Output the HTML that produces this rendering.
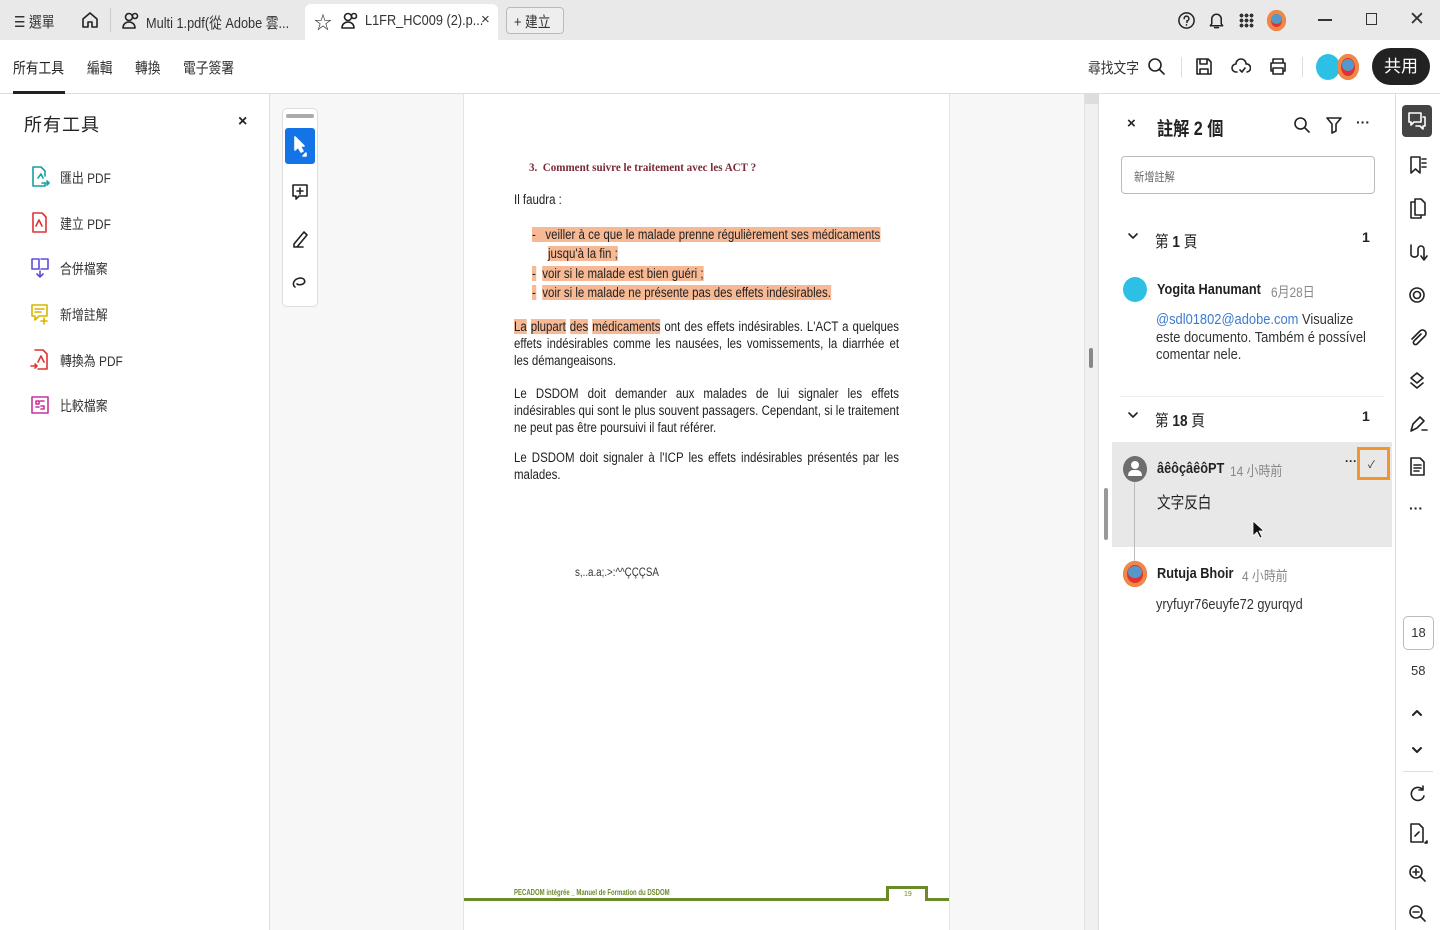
<!DOCTYPE html>
<html><head><meta charset="utf-8"><style>
*{margin:0;padding:0;box-sizing:border-box}
body{width:1440px;height:930px;overflow:hidden;background:#fff;font-family:"Liberation Sans","Noto Sans CJK TC",sans-serif;color:#222;position:relative}
.a{position:absolute}
.n{transform:scaleX(.85);transform-origin:0 0;white-space:nowrap}
svg{position:absolute;fill:none;stroke:#222;stroke-width:1.6;stroke-linecap:round;stroke-linejoin:round}
.t{font-size:14px;color:#333}
.pdf{font-size:13.5px;color:#222;line-height:17px;text-align:justify;width:453px;transform:scaleX(.85);transform-origin:0 0}
.hl{background:#f7b894}
.ri{left:1408px}
</style></head><body>
<!-- tab bar -->
<div class="a" style="left:0;top:0;width:1440px;height:40px;background:#e9e9e9"></div>
<div class="a" style="left:305px;top:4px;width:193px;height:36px;background:#fff;border-radius:6px 6px 0 0"></div>
<div class="a t n" style="left:14px;top:11px;font-size:15px">☰ 選單</div>
<svg style="left:80px;top:10px" width="20" height="20" viewBox="0 0 20 20"><path d="M3 9L10 3L17 9V17H12V12H8V17H3Z"/></svg>
<div class="a" style="left:110px;top:8px;width:1px;height:24px;background:#ccc"></div>
<svg style="left:121px;top:11px" width="20" height="20" viewBox="0 0 20 20"><circle cx="8" cy="6" r="3.5"/><path d="M2 17c0-4 3-6 6-6s6 2 6 6z"/><circle cx="14" cy="5" r="2.5"/></svg>
<div class="a t n" style="left:146px;top:12px;font-size:15px">Multi 1.pdf(從 Adobe 雲...</div>
<div class="a" style="left:314px;top:9px;font-size:18px;color:#333">☆</div>
<svg style="left:340px;top:11px" width="20" height="20" viewBox="0 0 20 20"><circle cx="8" cy="6" r="3.5"/><path d="M2 17c0-4 3-6 6-6s6 2 6 6z"/><circle cx="14" cy="5" r="2.5"/></svg>
<div class="a t n" style="left:365px;top:12px;font-size:15px">L1FR_HC009 (2).p...</div>
<div class="a t" style="left:481px;top:11px;font-size:15px">×</div>
<div class="a t" style="left:506px;top:7px;width:58px;height:27px;border:1px solid #bbb;border-radius:4px;background:#eee;font-size:15px;padding:3px 0 0 7px"><span class="n" style="display:inline-block">+ 建立</span></div>
<svg style="left:1177px;top:11px" width="19" height="19" viewBox="0 0 20 20"><circle cx="10" cy="10" r="8"/><path d="M7.5 8a2.5 2.5 0 1 1 3 2.4V12M10 14.5v.2"/></svg>
<svg style="left:1207px;top:10px" width="19" height="20" viewBox="0 0 20 20"><path d="M5 14V9a5 5 0 0 1 10 0v5l1.5 2h-13zM8 18h4"/></svg>
<div class="a" style="left:1239px;top:13px;width:15px;height:15px;background:radial-gradient(circle,#333 1.8px,transparent 2px) 0 0/5px 5px"></div>
<div class="a" style="left:1267px;top:10px;width:19px;height:21px;border-radius:50%;background:#d33;box-shadow:inset 0 0 0 4px #e84"></div><div class="a" style="left:1271px;top:14px;width:11px;height:10px;border-radius:50%;background:#59c"></div>
<div class="a" style="left:1318px;top:19px;width:14px;height:1.5px;background:#333"></div>
<div class="a" style="left:1366px;top:13px;width:11px;height:12px;border:1.5px solid #333"></div>
<div class="a t" style="left:1409px;top:8px;font-size:19px">✕</div>
<!-- toolbar -->
<div class="a" style="left:0;top:93px;width:1440px;height:1px;background:#ddd"></div>
<div class="a n" style="left:13px;top:57px;font-size:15px">所有工具</div>
<div class="a" style="left:13px;top:91px;width:52px;height:3px;background:#222"></div>
<div class="a t n" style="left:87px;top:57px;font-size:15px">編輯</div>
<div class="a t n" style="left:135px;top:57px;font-size:15px">轉換</div>
<div class="a t n" style="left:183px;top:57px;font-size:15px">電子簽署</div>
<div class="a t n" style="left:1088px;top:57px;font-size:15px">尋找文字</div>
<svg style="left:1147px;top:57px" width="20" height="20" viewBox="0 0 20 20"><circle cx="8" cy="8" r="6"/><path d="M12.5 12.5L17 17"/></svg>
<div class="a" style="left:1181px;top:57px;width:1px;height:20px;background:#ddd"></div>
<svg style="left:1195px;top:57px" width="18" height="19" viewBox="0 0 18 19"><path d="M2 2h11l3 3v12H2z M5 2v5h7V2 M5 17v-5h8v5"/></svg>
<svg style="left:1231px;top:57px" width="20" height="18" viewBox="0 0 20 18"><path d="M6 15H5a4 4 0 0 1 0-8 5 5 0 0 1 10 0 4 4 0 0 1 1 8M9 13l2 2 3-4"/></svg>
<svg style="left:1268px;top:57px" width="20" height="19" viewBox="0 0 20 19"><path d="M5 6V2h10v4M3 6h14v8h-2M5 14H3V6M5 11h10v6H5z"/></svg>
<div class="a" style="left:1302px;top:57px;width:1px;height:20px;background:#ddd"></div>
<div class="a" style="left:1316px;top:54px;width:24px;height:26px;border-radius:50%;background:#2bc0e4"></div>
<div class="a" style="left:1337px;top:54px;width:22px;height:26px;border-radius:50%;background:#d33;box-shadow:inset 0 0 0 4px #e84"></div><div class="a" style="left:1342px;top:59px;width:12px;height:12px;border-radius:50%;background:#59c"></div>
<div class="a" style="left:1372px;top:48px;width:58px;height:37px;border-radius:19px;background:#222;color:#fff;font-size:17px;text-align:center;line-height:37px">共用</div>
<!-- left panel -->
<div class="a" style="left:269px;top:94px;width:1px;height:836px;background:#ddd"></div>
<div class="a" style="left:24px;top:111px;font-size:18px;letter-spacing:1px">所有工具</div>
<div class="a" style="left:238px;top:113px;font-size:16px;font-weight:bold">×</div>
<svg style="left:30px;top:166px;stroke:#1a9e9e" width="20" height="22" viewBox="0 0 20 22"><path d="M3 1h8l4 4v5M15 17v3H3V1M8 12l3-4 2 4M12 17h7M17 15l2 2-2 2"/></svg>
<svg style="left:30px;top:212px;stroke:#d33" width="20" height="22" viewBox="0 0 20 22"><path d="M3 1h9l4 4v15H3zM6 14l3-6 3 6"/></svg>
<svg style="left:30px;top:257px;stroke:#5b4fd6" width="20" height="22" viewBox="0 0 20 22"><path d="M2 2h7v10H2zM11 2h7v10h-7M10 14v6M7 17l3 3 3-3"/></svg>
<svg style="left:30px;top:303px;stroke:#d7b400" width="20" height="22" viewBox="0 0 20 22"><path d="M2 2h15v11H9l-4 4v-4H2zM5 6h9M5 9h6M14 15v6M11 18h6"/></svg>
<svg style="left:30px;top:349px;stroke:#d33" width="20" height="22" viewBox="0 0 20 22"><path d="M5 1h8l4 4v15H8M8 13l3-6 3 6M1 17h6M5 15l2 2-2 2"/></svg>
<svg style="left:30px;top:395px;stroke:#c8329e" width="20" height="20" viewBox="0 0 20 20"><path d="M2 2h16v16H2zM6 6h3v3H6zM11 11h3v3h-3M10 6h4M6 12h3"/></svg>
<div class="a t n" style="left:60px;top:168px">匯出 PDF</div>
<div class="a t n" style="left:60px;top:214px">建立 PDF</div>
<div class="a t n" style="left:60px;top:259px">合併檔案</div>
<div class="a t n" style="left:60px;top:305px">新增註解</div>
<div class="a t n" style="left:60px;top:351px">轉換為 PDF</div>
<div class="a t n" style="left:60px;top:396px">比較檔案</div>
<!-- canvas -->
<div class="a" style="left:270px;top:94px;width:829px;height:836px;background:#f7f7f7"></div>
<div class="a" style="left:282px;top:108px;width:36px;height:199px;background:#fff;border:1px solid #ddd;border-radius:5px"></div>
<div class="a" style="left:286px;top:114px;width:28px;height:4px;background:#aaa;border-radius:2px"></div>
<div class="a" style="left:285px;top:128px;width:30px;height:36px;background:#1473e6;border-radius:3px"></div>
<svg style="left:292px;top:135px;fill:#fff;stroke:#fff" width="16" height="22" viewBox="0 0 16 22"><path d="M3 2v13l3-3 3 5 2-1-3-5h4z"/><path d="M14 18l-3 3h3z"/></svg>
<svg style="left:290px;top:182px" width="20" height="20" viewBox="0 0 20 20"><path d="M3 3h14v11h-8l-3 3v-3H3zM10 6v6M7 9h6"/></svg>
<svg style="left:290px;top:227px" width="22" height="24" viewBox="0 0 22 24"><path d="M4 17l10-12 3 3-10 12H4zM4 20h9"/></svg>
<svg style="left:290px;top:274px" width="20" height="18" viewBox="0 0 20 18"><path d="M5 13C2 11 3 5 10 4c5 0 6 4 3 6-2 1-5 1-6 0"/></svg>
<!-- page -->
<div class="a" style="left:463px;top:94px;width:487px;height:836px;background:#fff;border-left:1px solid #e4e4e4;border-right:1px solid #e4e4e4"></div>
<div class="a" style="left:529px;top:160px;font-family:'Liberation Serif',serif;font-weight:bold;font-size:12px;color:#7a2a35;transform:scaleX(.92);transform-origin:0 0;white-space:nowrap">3.&nbsp; Comment suivre le traitement avec les ACT ?</div>
<div class="a pdf" style="left:514px;top:191px">Il faudra :</div>
<div class="a pdf" style="left:532px;top:225px;text-align:left;white-space:nowrap;line-height:19.3px"><span class="hl">-&nbsp;&nbsp; veiller à ce que le malade prenne régulièrement ses médicaments</span><br>&nbsp;&nbsp;&nbsp;&nbsp;&nbsp;<span class="hl">jusqu'à la fin ;</span><br><span class="hl">-</span>&nbsp; <span class="hl">voir si le malade est bien guéri ;</span><br><span class="hl">-</span>&nbsp; <span class="hl">voir si le malade ne présente pas des effets indésirables.</span></div>
<div class="a pdf" style="left:514px;top:318px"><span class="hl">La</span> <span class="hl">plupart</span> <span class="hl">des</span> <span class="hl">médicaments</span> ont des effets indésirables. L'ACT a quelques effets indésirables comme les nausées, les vomissements, la diarrhée et les démangeaisons.</div>
<div class="a pdf" style="left:514px;top:385px">Le DSDOM doit demander aux malades de lui signaler les effets indésirables qui sont le plus souvent passagers. Cependant, si le traitement ne peut pas être poursuivi il faut référer.</div>
<div class="a pdf" style="left:514px;top:449px">Le DSDOM doit signaler à l'ICP les effets indésirables présentés par les malades.</div>
<div class="a n" style="left:575px;top:567px;font-size:11.5px;color:#333">s,..a.a;.&gt;:^^ÇÇÇSA</div>
<div class="a" style="left:514px;top:888px;font-size:8px;font-weight:bold;color:#6b8a2a;transform:scaleX(.75);transform-origin:left;white-space:nowrap">PECADOM intégrée _ Manuel de Formation du DSDOM</div>
<div class="a" style="left:464px;top:898px;width:423px;height:3px;background:#6b8a2a"></div>
<div class="a" style="left:886px;top:886px;width:42px;height:15px;border:3px solid #6b8a2a;border-bottom:none"></div>
<div class="a" style="left:927px;top:898px;width:22px;height:3px;background:#6b8a2a"></div>
<div class="a" style="left:904px;top:891px;font-size:7px;color:#6b8a2a">19</div>
<!-- scrollbar -->
<div class="a" style="left:1084px;top:94px;width:14px;height:836px;background:#f0f0f0;border-left:1px solid #e2e2e2"></div>
<div class="a" style="left:1085px;top:94px;width:13px;height:10px;background:#ddd"></div>
<div class="a" style="left:1089px;top:348px;width:4px;height:20px;background:#888;border-radius:2px"></div>
<div class="a" style="left:1098px;top:94px;width:1px;height:836px;background:#ddd"></div>
<!-- comments panel -->
<div class="a" style="left:1127px;top:115px;font-size:15px;font-weight:bold">×</div>
<div class="a n" style="left:1157px;top:114px;font-size:19px;font-weight:bold">註解 2 個</div>
<svg style="left:1293px;top:116px" width="18" height="18" viewBox="0 0 18 18"><circle cx="7.5" cy="7.5" r="5.5"/><path d="M11.5 11.5L16 16"/></svg>
<svg style="left:1325px;top:116px" width="18" height="18" viewBox="0 0 18 18"><path d="M2 2h14l-5 6v7l-4 2V8z"/></svg>
<div class="a" style="left:1356px;top:114px;font-size:14px;font-weight:bold">···</div>
<div class="a" style="left:1121px;top:156px;width:254px;height:38px;border:1px solid #bbb;border-radius:4px;font-size:12px;color:#666;padding:11px 12px"><span class="n" style="display:inline-block">新增註解</span></div>
<svg style="left:1127px;top:231px" width="12" height="10" viewBox="0 0 12 10"><path d="M2 3l4 4 4-4"/></svg>
<div class="a n" style="left:1155px;top:228px;font-size:16px">第 <b>1</b> 頁</div>
<div class="a" style="left:1362px;top:229px;font-size:14px;font-weight:bold">1</div>
<div class="a" style="left:1123px;top:277px;width:24px;height:25px;border-radius:50%;background:#2bc0e4"></div>
<div class="a n" style="left:1157px;top:281px;font-size:15px;font-weight:bold">Yogita Hanumant</div>
<div class="a n" style="left:1271px;top:282px;font-size:14px;color:#888">6月28日</div>
<div class="a" style="left:1156px;top:311px;font-size:15px;line-height:17.5px;color:#333;width:250px;transform:scaleX(.86);transform-origin:0 0"><span style="color:#3b7bd0">@sdl01802@adobe.com</span> Visualize este documento. Também é possível comentar nele.</div>
<div class="a" style="left:1120px;top:396px;width:264px;height:1px;background:#eee"></div>
<svg style="left:1127px;top:410px" width="12" height="10" viewBox="0 0 12 10"><path d="M2 3l4 4 4-4"/></svg>
<div class="a n" style="left:1155px;top:407px;font-size:16px">第 <b>18</b> 頁</div>
<div class="a" style="left:1362px;top:408px;font-size:14px;font-weight:bold">1</div>
<div class="a" style="left:1112px;top:442px;width:280px;height:105px;background:#e8e8e8"></div>
<div class="a" style="left:1123px;top:456px;width:24px;height:26px;border-radius:50%;background:#6e6e6e"></div>
<div class="a" style="left:1131px;top:461px;width:8px;height:8px;border-radius:50%;background:#fff"></div>
<div class="a" style="left:1128px;top:470px;width:14px;height:6px;border-radius:6px 6px 1px 1px;background:#fff"></div>
<div class="a" style="left:1134px;top:482px;width:1px;height:80px;background:#bbb"></div>
<div class="a n" style="left:1157px;top:460px;font-size:15px;font-weight:bold">âêôçâêôPT</div>
<div class="a n" style="left:1230px;top:461px;font-size:14px;color:#888">14 小時前</div>
<div class="a" style="left:1345px;top:454px;font-size:12px;font-weight:bold">···</div>
<div class="a" style="left:1357px;top:447px;width:33px;height:33px;border:3px solid #f0962c"></div>
<div class="a" style="left:1368px;top:456px;font-size:10px">✓</div>
<div class="a n" style="left:1157px;top:489px;font-size:16px">文字反白</div>
<svg style="left:1252px;top:520px;fill:#111;stroke:#fff;stroke-width:.8" width="14" height="20" viewBox="0 0 14 20"><path d="M1 1v15l4-4 3 6 2-1-3-6h5z"/></svg>
<div class="a" style="left:1104px;top:488px;width:4px;height:52px;background:#999;border-radius:2px"></div>
<div class="a" style="left:1123px;top:561px;width:24px;height:26px;border-radius:50%;background:#d33;box-shadow:inset 0 0 0 4px #e84"></div><div class="a" style="left:1128px;top:566px;width:14px;height:12px;border-radius:50%;background:#59c"></div>
<div class="a n" style="left:1157px;top:565px;font-size:15px;font-weight:bold">Rutuja Bhoir</div>
<div class="a n" style="left:1242px;top:566px;font-size:14px;color:#888">4 小時前</div>
<div class="a n" style="left:1156px;top:596px;font-size:15px;color:#333">yryfuyr76euyfe72 gyurqyd</div>
<!-- right rail -->
<div class="a" style="left:1395px;top:94px;width:1px;height:836px;background:#ddd"></div>
<div class="a" style="left:1402px;top:105px;width:30px;height:32px;background:#444;border-radius:4px"></div>
<svg style="left:1407px;top:111px;stroke:#fff" width="20" height="20" viewBox="0 0 20 20"><path d="M2 2h12v9H7l-3 3v-3H2zM16 6h2v9h-2v3l-3-3H9"/></svg>
<svg class="ri" style="top:155px" width="20" height="20" viewBox="0 0 20 20"><path d="M3 2h9v16l-4.5-4L3 18zM14 4h4M14 8h4M14 12h4"/></svg>
<svg class="ri" style="top:198px" width="20" height="22" viewBox="0 0 20 22"><path d="M6 4H3v16h10v-3M7 1h6l4 4v12H7z"/></svg>
<svg class="ri" style="top:241px" width="20" height="22" viewBox="0 0 20 22"><path d="M3 4v10a4 4 0 0 0 7 0V8a3 3 0 0 1 6 0v10M13 15l3 4 3-4"/></svg>
<svg class="ri" style="top:285px" width="20" height="20" viewBox="0 0 20 20"><circle cx="9" cy="10" r="7"/><circle cx="9" cy="10" r="3.5"/></svg>
<svg class="ri" style="top:328px" width="20" height="20" viewBox="0 0 20 20"><path d="M13 6l-7 7a2 2 0 0 0 3 3l8-8a3.5 3.5 0 0 0-5-5L4 11"/></svg>
<svg class="ri" style="top:371px" width="20" height="20" viewBox="0 0 20 20"><path d="M9 2l6 5-6 5-6-5zM3 12l6 5 6-5"/></svg>
<svg class="ri" style="top:414px" width="22" height="20" viewBox="0 0 22 20"><path d="M3 17l2-7 7-7 4 4-7 7zM14 16h5"/></svg>
<svg class="ri" style="top:456px" width="20" height="21" viewBox="0 0 20 21"><path d="M3 2h9l4 4v13H3zM6 9h7M6 12h7M6 15h5"/></svg>
<div class="a" style="left:1409px;top:500px;font-size:14px;font-weight:bold">···</div>
<div class="a" style="left:1403px;top:616px;width:31px;height:34px;border:1px solid #bbb;border-radius:5px;font-size:13px;text-align:center;line-height:32px;color:#333">18</div>
<div class="a" style="left:1411px;top:663px;font-size:13px;color:#333">58</div>
<svg class="ri" style="top:706px" width="20" height="14" viewBox="0 0 20 14"><path d="M5 9l4-4 4 4" stroke-width="2"/></svg>
<svg class="ri" style="top:744px" width="20" height="14" viewBox="0 0 20 14"><path d="M5 4l4 4 4-4" stroke-width="2"/></svg>
<div class="a" style="left:1403px;top:771px;width:30px;height:1px;background:#ddd"></div>
<svg class="ri" style="top:784px" width="20" height="20" viewBox="0 0 20 20"><path d="M15 6a6.5 6.5 0 1 0 1 6M15 2v4h-4"/></svg>
<svg class="ri" style="top:822px" width="22" height="24" viewBox="0 0 22 24"><path d="M3 2h8l4 4v14H3zM7 14l4-4M19 21l-2 0 2-2z"/></svg>
<svg class="ri" style="top:864px" width="20" height="20" viewBox="0 0 20 20"><circle cx="8" cy="8" r="6"/><path d="M12.5 12.5L17 17M5 8h6M8 5v6"/></svg>
<svg class="ri" style="top:904px" width="20" height="20" viewBox="0 0 20 20"><circle cx="8" cy="8" r="6"/><path d="M12.5 12.5L17 17M5 8h6"/></svg>
</body></html>
